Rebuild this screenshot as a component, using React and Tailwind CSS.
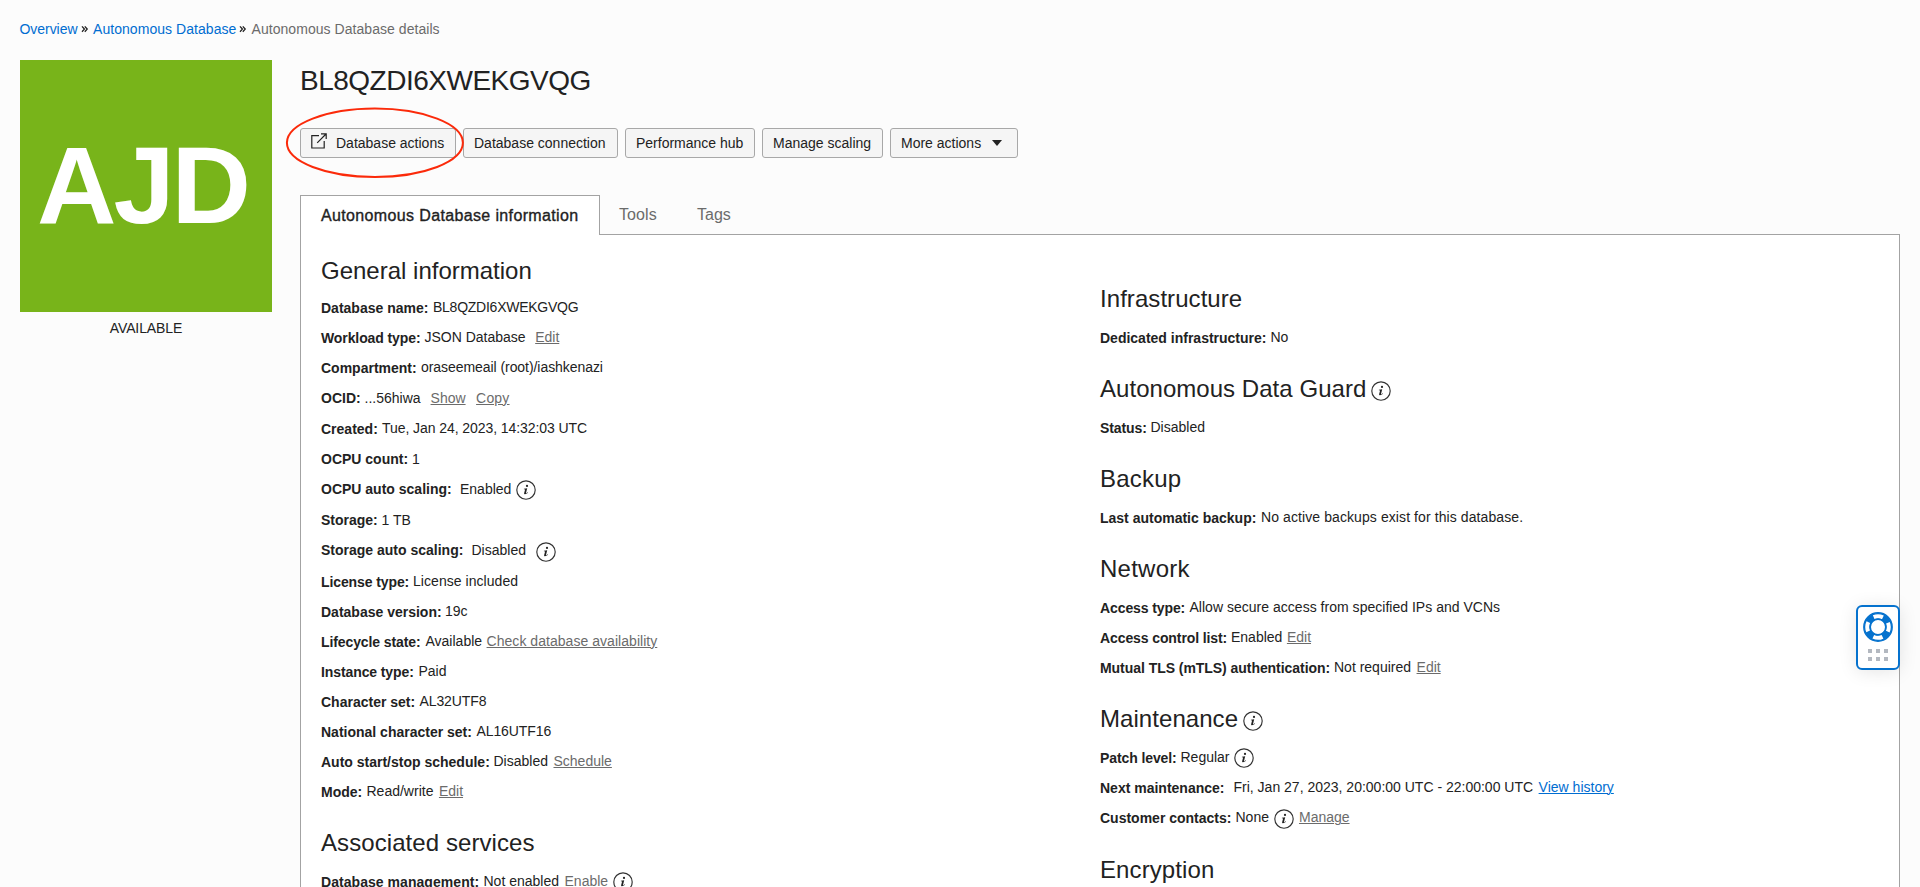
import React from "react";

function InfoIcon({ className = "" }) {
  return (
    <svg viewBox="0 0 20 20" className={`h-5 w-5 shrink-0 self-start ${className}`} fill="none">
      <circle cx="10" cy="10" r="9.2" stroke="#333" strokeWidth="1.15" />
      <circle cx="11" cy="5.9" r="1.1" fill="#222" />
      <path d="M11.2 8.2 L10 12.9 C9.9 13.5 10.3 13.4 11.7 12.3 L12 12.8 C10.4 14.3 8 14.9 8.1 13.3 L9.1 9.4 L7.9 9.3 V8.8 Z" fill="#222" />
    </svg>
  );
}

function Heading({ children, h = "h-[45px]", className = "" }) {
  return <h2 className={`flex ${h} ${className} whitespace-nowrap text-[24px] leading-[32px] text-[#222]`}>{children}</h2>;
}

function Row({ label, w, h = "h-[30px]", up = true, children }) {
  return (
    <div className={`flex ${h} shrink-0 items-start whitespace-nowrap`}>
      <span className={`${w} shrink-0 font-bold`}>{label}</span>
      <span className={`flex ${up ? "-mt-px" : ""}`}>{children}</span>
    </div>
  );
}

function Tight({ children }) {
  return <span className="tracking-[-0.1px]">{children}</span>;
}

function Link({ className = "ml-1", children }) {
  return <a className={`${className} text-[#6b6b6b] underline decoration-1 underline-offset-1`}>{children}</a>;
}

function Button({ w, children }) {
  return (
    <button className={`${w} flex h-[30px] shrink-0 items-center rounded-[3px] border border-[#a8a8a8] bg-[#f5f5f5] pb-px pl-[10px] text-left leading-5 whitespace-nowrap`}>
      {children}
    </button>
  );
}

function Crumb({ className }) {
  return (
    <svg viewBox="0 0 8 8" className={`mt-[6px] h-2 w-2 ${className}`} fill="none" stroke="#222" strokeWidth="1.3">
      <path d="M1 1.4 L3.4 4.1 L1 6.8 M3.8 1.4 L6.2 4.1 L3.8 6.8" />
    </svg>
  );
}

export default function App() {
  return (
    <div className="relative h-[887px] w-full overflow-hidden bg-[#fcfcfc] font-['Liberation_Sans',Arial,sans-serif] text-[14px] leading-[20px] text-[#222]">
      <nav className="flex h-[60px] items-start pt-[19px] pl-[19.5px] whitespace-nowrap">
        <a className="w-[61px] tracking-[-0.05px] text-[#006dd1]">Overview</a>
        <Crumb className="mr-[4.5px]" />
        <a className="w-[145.5px] tracking-[0.05px] text-[#006dd1]">Autonomous Database</a>
        <Crumb className="mr-[5px]" />
        <span className="tracking-[0.05px] text-[#6b6b6b]">Autonomous Database details</span>
      </nav>

      <div className="flex pl-5">
        <aside className="w-[252px] shrink-0">
          <div className="flex h-[252px] w-[252px] items-center justify-center bg-[#78b41a] pr-[7px] pb-[2px]">
            <span className="text-[110px] leading-none font-bold tracking-[-3px] text-white">AJD</span>
          </div>
          <div className="mt-[6px] text-center tracking-[-0.1px]">AVAILABLE</div>
        </aside>

        <main className="ml-7 w-[1600px] shrink-0">
          <h1 className="h-[68px] pt-[3px] text-[28px] leading-[36px] tracking-[-0.5px]">BL8QZDI6XWEKGVQG</h1>

          <div className="flex h-[67px] gap-[7px]">
            <Button w="w-[156px]">
              <svg viewBox="0 0 16 16" className="mt-[-3px] mr-[9px] h-4 w-4" fill="none" stroke="#222" strokeWidth="1.2">
                <path d="M8 2.6 H0.8 V15 H13.2 V8 M6.2 9.8 L15 1 M10 0.8 H15.2 V6" />
              </svg>
              Database actions
            </Button>
            <Button w="w-[155px]">Database connection</Button>
            <Button w="w-[130px]">Performance hub</Button>
            <Button w="w-[121px]">Manage scaling</Button>
            <Button w="w-[128px]">
              More actions
              <svg viewBox="0 0 10 6" className="ml-[11px] h-[6px] w-[10px]" fill="#222">
                <path d="M0 0 H10 L5 6 Z" />
              </svg>
            </Button>
          </div>

          <div className="flex h-[40px] text-[16px]">
            <div className="z-10 h-[40px] w-[300px] border-x border-t border-[#a3a3a3] bg-white pt-[10px] pl-[20px] tracking-[0.36px] whitespace-nowrap text-[#222] [-webkit-text-stroke:0.35px_#222]">
              Autonomous Database information
            </div>
            <div className="flex flex-1 border-b border-[#a3a3a3] pt-[10px] text-[#6b6b6b]">
              <span className="w-[78px] pl-[19px] tracking-[0.1px]">Tools</span>
              <span className="pl-[19px]">Tags</span>
            </div>
          </div>

          <div className="flex h-[700px] border-x border-[#a3a3a3] bg-white pl-[20px]">
            <section className="w-[779px] shrink-0 pt-[20px]">
              <Heading h="h-[43px]">General information</Heading>
              <Row label="Database name:" w="w-[112px]"><span className="tracking-[-0.25px]">BL8QZDI6XWEKGVQG</span></Row>
              <Row label={<Tight>Workload type:</Tight>} w="w-[103.5px]">JSON Database<Link className="ml-[9.5px]">Edit</Link></Row>
              <Row label="Compartment:" w="w-[100px]"><span className="tracking-[-0.06px]">oraseemeail (root)/iashkenazi</span></Row>
              <Row label="OCID:" w="w-[43.5px]" h="h-[31px]" up={false}>...56hiwa<Link className="ml-[10px]">Show</Link><Link className="ml-[10.5px] tracking-[0.2px]">Copy</Link></Row>
              <Row label="Created:" w="w-[61px]"><span className="tracking-[-0.07px]">Tue, Jan 24, 2023, 14:32:03 UTC</span></Row>
              <Row label="OCPU count:" w="w-[91px]" up={false}>1</Row>
              <Row label="OCPU auto scaling:" w="w-[139px]" h="h-[31px]" up={false}>Enabled<InfoIcon className="mt-px ml-[4.5px]" /></Row>
              <Row label="Storage:" w="w-[60.5px]" up={false}>1 TB</Row>
              <Row label="Storage auto scaling:" w="w-[150.5px]" h="h-[32px]" up={false}>Disabled<InfoIcon className="mt-[2px] ml-[10.5px]" /></Row>
              <Row label={<Tight>License type:</Tight>} w="w-[92px]"><span className="tracking-[0.05px]">License included</span></Row>
              <Row label="Database version:" w="w-[124px]">19c</Row>
              <Row label={<Tight>Lifecycle state:</Tight>} w="w-[104.5px]">Available<Link className="ml-[4.5px] tracking-[0.04px]">Check database availability</Link></Row>
              <Row label={<Tight>Instance type:</Tight>} w="w-[97.5px]">Paid</Row>
              <Row label="Character set:" w="w-[98.5px]"><span className="tracking-[-0.1px]">AL32UTF8</span></Row>
              <Row label="National character set:" w="w-[155.5px]"><span className="tracking-[-0.1px]">AL16UTF16</span></Row>
              <Row label="Auto start/stop schedule:" w="w-[172.5px]">Disabled<Link className="ml-[5.5px]">Schedule</Link></Row>
              <Row label="Mode:" w="w-[45.5px]">Read/write<Link className="ml-[5.5px]">Edit</Link></Row>
              <div className="h-[15px]" />
              <Heading className="tracking-[0.08px]">Associated services</Heading>
              <Row label={<span className="tracking-[0.05px]">Database management:</span>} w="w-[162.5px]">
                Not enabled
                <a className="ml-[5.5px] text-[#6b6b6b] underline decoration-1 underline-offset-1">Enable</a>
                <InfoIcon className="mt-px ml-[5px]" />
              </Row>
            </section>

            <section className="flex flex-col gap-[15px] pt-[48px]">
              <div>
                <Heading className="tracking-[0.06px]">Infrastructure</Heading>
                <Row label="Dedicated infrastructure:" w="w-[170.5px]">No</Row>
              </div>
              <div>
                <Heading className="tracking-[0.04px]">Autonomous Data Guard<InfoIcon className="mt-[8px] ml-[5px]" /></Heading>
                <Row label={<Tight>Status:</Tight>} w="w-[50.5px]">Disabled</Row>
              </div>
              <div>
                <Heading className="tracking-[0.2px]">Backup</Heading>
                <Row label="Last automatic backup:" w="w-[161px]"><span className="tracking-[0.09px]">No active backups exist for this database.</span></Row>
              </div>
              <div>
                <Heading className="tracking-[0.25px]">Network</Heading>
                <Row label={<Tight>Access type:</Tight>} w="w-[89.5px]"><span className="tracking-[0.02px]">Allow secure access from specified IPs and VCNs</span></Row>
                <Row label={<Tight>Access control list:</Tight>} w="w-[131px]">Enabled<Link className="ml-[4.5px]">Edit</Link></Row>
                <Row label={<span className="tracking-[-0.05px]">Mutual TLS (mTLS) authentication:</span>} w="w-[234px]">Not required<Link className="ml-[5.5px]">Edit</Link></Row>
              </div>
              <div>
                <Heading className="tracking-[0.06px]">Maintenance<InfoIcon className="mt-[8px] ml-[5px]" /></Heading>
                <Row label={<Tight>Patch level:</Tight>} w="w-[80.5px]">Regular<InfoIcon className="mt-px ml-[4.5px]" /></Row>
                <Row label="Next maintenance:" w="w-[133.5px]">
                  Fri, Jan 27, 2023, 20:00:00 UTC - 22:00:00 UTC
                  <a className="ml-[5.5px] text-[#006dd1] underline decoration-1 underline-offset-1">View history</a>
                </Row>
                <Row label="Customer contacts:" w="w-[135.5px]">None<InfoIcon className="mt-[2px] ml-[5px]" /><Link className="ml-[5px]">Manage</Link></Row>
              </div>
              <Heading className="pt-px tracking-[0.1px]">Encryption</Heading>
            </section>
          </div>
        </main>
      </div>

      <svg viewBox="0 0 180 72" className="absolute top-[107px] left-[285px] h-[72px] w-[180px]" fill="none">
        <ellipse cx="89.9" cy="35.8" rx="88" ry="34.2" stroke="#fb2a0a" strokeWidth="2" />
      </svg>

      <div className="absolute top-[605px] left-[1856px] z-20 flex h-[65px] w-[44px] flex-col items-center rounded-[6px] border-2 border-[#0572ce] bg-white pt-[5px] shadow-[0_2px_18px_rgba(0,0,0,0.1)]">
        <svg viewBox="0 0 30 30" className="h-[30px] w-[30px]" fill="none">
          <circle cx="15" cy="15" r="10.8" stroke="#0572ce" strokeWidth="6.5" />
          <circle cx="15" cy="15" r="10.8" stroke="#fff" strokeWidth="4" strokeDasharray="9.5 7.46" strokeDashoffset="4.75" />
          <circle cx="15" cy="15" r="14.2" stroke="#0572ce" strokeWidth="1.4" />
          <circle cx="15" cy="15" r="7.7" stroke="#0572ce" strokeWidth="1.4" />
        </svg>
        <div className="mt-[7px] grid grid-cols-3 gap-1">
          <i className="h-1 w-1 bg-[#b3b8c0]" /><i className="h-1 w-1 bg-[#b3b8c0]" /><i className="h-1 w-1 bg-[#b3b8c0]" />
          <i className="h-1 w-1 bg-[#b3b8c0]" /><i className="h-1 w-1 bg-[#b3b8c0]" /><i className="h-1 w-1 bg-[#b3b8c0]" />
        </div>
      </div>
    </div>
  );
}
